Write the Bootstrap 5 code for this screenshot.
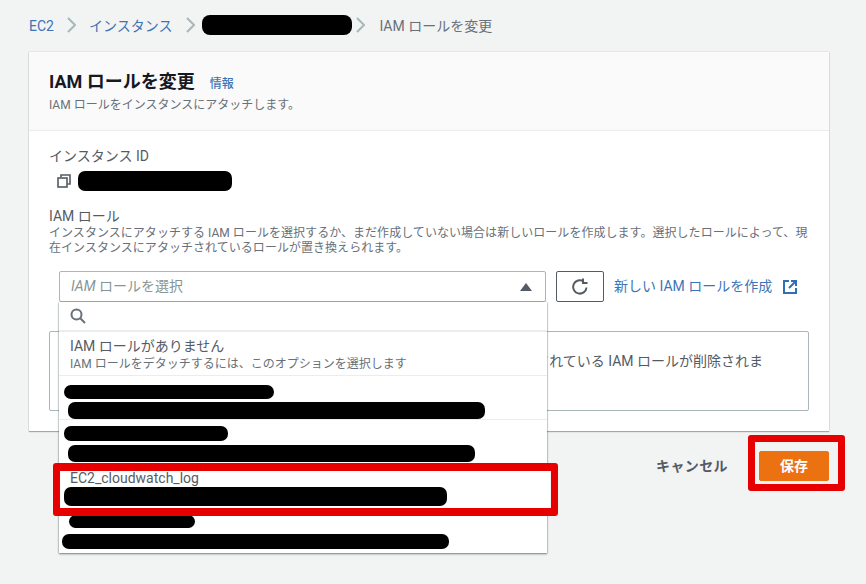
<!DOCTYPE html>
<html lang="ja">
<head>
    <meta charset="UTF-8">
    <meta name="viewport" content="width=device-width, initial-scale=1.0">
    <title>IAM ロールを変更</title>
    <link rel="stylesheet" href="https://cdn.jsdelivr.net/npm/bootstrap@5.3.0/dist/css/bootstrap.min.css">
    <style>
        html, body { height: 584px; overflow: hidden; }
        body {
            background: #f2f3f3;
            color: #16191f;
            font-family: Roboto, "Noto Sans CJK JP", sans-serif;
            font-size: 14px;
            padding: 15px 37px 0 29px;
        }
        a { text-decoration: none; color: #3f74b5; }

        /* Blacked out values */
        .redact { background: #000; border-radius: 7px; display: block; }
        .redact-crumb { width: 150px; height: 20px; margin-right: 4px; border-radius: 8px; }
        .redact-id { width: 154px; height: 20px; margin-left: 7px; }
        .redact-a { width: 210px; height: 14px; margin-left: -6px; }
        .redact-b { width: 417px; height: 17px; margin: 3px 0 0 -2px; }
        .redact-c { width: 164px; height: 15px; margin-left: -6px; }
        .redact-d { width: 407px; height: 17px; margin: 4px 0 0 -2px; }
        .redact-e { width: 383px; height: 19px; margin: 0 0 0 -6px; }
        .redact-f { width: 126px; height: 13px; margin-left: -1px; }
        .redact-g { width: 387px; height: 15px; margin: 6px 0 0 -8px; }

        .crumbs { height: 20px; color: #687078; }
        .crumb-text { margin-top: 2px; }
        .crumb-sep { width: 9px; height: 16px; margin: 0 13px; flex: none; }
        .crumb-sep-tight { margin: 0 7px 0 14px; }
        .crumb-sep-after { margin: 0 14px 0 0; }

        .page-main { width: 800px; margin-top: 17px; }
        .panel-box { background: #fff; border: 0; border-radius: 0; box-shadow: 0 1px 1px rgba(0, 28, 36, .3), 0 0 1px rgba(0, 28, 36, .3); }
        .panel-head { background: #fafafa; border-bottom: 1px solid #eaeded; height: 79px; padding: 17px 20px 0; }
        .panel-title { font-size: 18px; font-weight: 700; line-height: 26px; margin: 0; }
        .info-link { font-size: 12px; margin-left: 15px; font-weight: 500; }
        .panel-sub { font-size: 12px; line-height: 15px; color: #687078; margin: 1px 0 0; }
        .panel-inner { padding: 15px 20px 20px; }

        .field-label { line-height: 20px; color: #545b64; }
        .field-desc { font-size: 12px; line-height: 15px; color: #687078; letter-spacing: .04px; }
        .id-row { height: 20px; margin: 5px 0 15px; padding-left: 8px; }

        .picker-row { margin: 15px 0 0 10px; height: 31px; }
        .picker-wrap { position: relative; width: 487px; }
        .picker { height: 31px; border: 1px solid #aab7b8; border-radius: 2px; background: #fff; padding: 0 13px 0 11px; color: #879596; }
        .refresh-btn { width: 48px; height: 31px; margin-left: 10px; padding: 0; border: 1px solid #545b64; border-radius: 2px; background: #fff; }
        .new-role { margin-left: 10px; }
        .new-role svg { margin-left: 11px; }

        .picker-menu { position: absolute; left: 0; top: 31px; width: 488px; height: 251px; background: #fff; z-index: 5; box-shadow: 0 1px 2px rgba(0, 28, 36, .5), 0 0 1px rgba(0, 28, 36, .4); }
        .menu-search { height: 30px; padding-left: 11px; border-bottom: 2px solid #eaeded; }
        .menu-opt { padding: 0 11px; }
        .menu-opt-none { height: 44px; padding-top: 4px; border-bottom: 1px solid #eaeded; }
        .opt-name { line-height: 20px; color: #545b64; }
        .opt-desc { font-size: 12px; line-height: 16px; color: #687078; }
        .menu-opt-one { height: 44px; padding-top: 9px; border-bottom: 1px solid #eaeded; }
        .menu-opt-two { height: 44px; padding-top: 6px; }
        .menu-opt-log { height: 44px; padding-top: 0; box-shadow: 3px 0 0 #fff; }
        .log-name { line-height: 18px; padding-top: 5px; height: 23px; color: #545b64; display: block; }
        .menu-opt-last { padding-top: 7px; }

        .notice-box { border: 1px solid #aab7b8; border-radius: 2px; height: 80px; margin-top: 29px; padding: 18px 40px 0 52px; color: #545b64; line-height: 22px; }

        .action-row { margin-top: 20px; height: 30px; }
        .cancel-link { color: #545b64; font-weight: 700; margin-right: 31px; letter-spacing: .4px; }
        .save-btn { width: 70px; height: 30px; padding: 0; background: #ec7211; border: 1px solid #ec7211; border-radius: 2px; color: #fff; font-size: 14px; font-weight: 700; }

        /* Red annotation frames */
        .note-frame { position: absolute; border: 7px solid #e60000; border-radius: 3px; z-index: 10; pointer-events: none; }
        .note-save { left: 748px; top: 435px; width: 97px; height: 56px; }
        .note-log { left: 53px; top: 463px; width: 505px; height: 53px; border-top-width: 8px; border-bottom-width: 8px; }
    </style>
</head>
<body>

    <nav class="crumbs d-flex align-items-center">
        <a href="#" class="crumb-text">EC2</a>
        <svg class="crumb-sep" viewBox="0 0 9 16"><path d="M1 1l7 7-7 7" fill="none" stroke="#aab7b8" stroke-width="2"/></svg>
        <a href="#" class="crumb-text">インスタンス</a>
        <svg class="crumb-sep crumb-sep-tight" viewBox="0 0 9 16"><path d="M1 1l7 7-7 7" fill="none" stroke="#aab7b8" stroke-width="2"/></svg>
        <span class="redact redact-crumb"></span>
        <svg class="crumb-sep crumb-sep-after" viewBox="0 0 9 16"><path d="M1 1l7 7-7 7" fill="none" stroke="#aab7b8" stroke-width="2"/></svg>
        <span class="crumb-text">IAM ロールを変更</span>
    </nav>

    <main class="page-main">
        <div class="card panel-box">
            <div class="panel-head">
                <h1 class="panel-title">IAM ロールを変更<a href="#" class="info-link">情報</a></h1>
                <p class="panel-sub">IAM ロールをインスタンスにアタッチします。</p>
            </div>
            <div class="panel-inner">
                <div class="field-label">インスタンス ID</div>
                <div class="id-row d-flex align-items-center">
                    <svg width="14" height="14" viewBox="0 0 14 14" fill="none" stroke="#545b64" stroke-width="1.6"><path d="M4 3.5V1h9v9h-2.5"/><rect x="1" y="4" width="9" height="9"/></svg>
                    <span class="redact redact-id"></span>
                </div>

                <div class="field-label">IAM ロール</div>
                <div class="field-desc">インスタンスにアタッチする IAM ロールを選択するか、まだ作成していない場合は新しいロールを作成します。選択したロールによって、現<br>在インスタンスにアタッチされているロールが置き換えられます。</div>

                <div class="picker-row d-flex align-items-center">
                    <div class="picker-wrap">
                        <div class="picker d-flex align-items-center justify-content-between">
                            <span><i>IAM</i> ロールを選択</span>
                            <svg width="12" height="8" viewBox="0 0 12 8"><path d="M6 0l6 8H0z" fill="#545b64"/></svg>
                        </div>
                        <div class="picker-menu">
                            <div class="menu-search d-flex align-items-center">
                                <svg width="16" height="16" viewBox="0 0 16 16" fill="none" stroke="#687078" stroke-width="2"><circle cx="6.5" cy="6.5" r="5"/><path d="M10 10l5 5"/></svg>
                            </div>
                            <div class="menu-opt menu-opt-none">
                                <div class="opt-name">IAM ロールがありません</div>
                                <div class="opt-desc">IAM ロールをデタッチするには、このオプションを選択します</div>
                            </div>
                            <div class="menu-opt menu-opt-one">
                                <span class="redact redact-a"></span>
                                <span class="redact redact-b"></span>
                            </div>
                            <div class="menu-opt menu-opt-two">
                                <span class="redact redact-c"></span>
                                <span class="redact redact-d"></span>
                            </div>
                            <div class="menu-opt menu-opt-log">
                                <span class="log-name">EC2_cloudwatch_log</span>
                                <span class="redact redact-e"></span>
                            </div>
                            <div class="menu-opt menu-opt-last">
                                <span class="redact redact-f"></span>
                                <span class="redact redact-g"></span>
                            </div>
                        </div>
                    </div>
                    <button type="button" class="refresh-btn d-flex align-items-center justify-content-center">
                        <svg width="18" height="18" viewBox="0 0 18 18" fill="none" stroke="#545b64" stroke-width="2"><path d="M15.5 9.5A6.7 6.7 0 1 1 12.5 3.3"/><path d="M12 .5v4.5h4.5" stroke-width="2"/></svg>
                    </button>
                    <a href="#" class="new-role d-flex align-items-center">新しい IAM ロールを作成
                        <svg width="14" height="14" viewBox="0 0 14 14" fill="none" stroke="#2f6fb5" stroke-width="2"><path d="M6 1H1v12h12V8"/><path d="M8 1h5v5M13 1L6 8"/></svg>
                    </a>
                </div>

                <div class="notice-box">「IAM ロールがありません」を選択すると、インスタンスにアタッチされている IAM ロールが削除されます。</div>
            </div>
        </div>

        <div class="action-row d-flex align-items-center justify-content-end">
            <a href="#" class="cancel-link">キャンセル</a>
            <button type="button" class="save-btn">保存</button>
        </div>
    </main>

    <div class="note-frame note-log"></div>
    <div class="note-frame note-save"></div>

    <script src="https://cdn.jsdelivr.net/npm/bootstrap@5.3.0/dist/js/bootstrap.bundle.min.js"></script>
</body>
</html>
